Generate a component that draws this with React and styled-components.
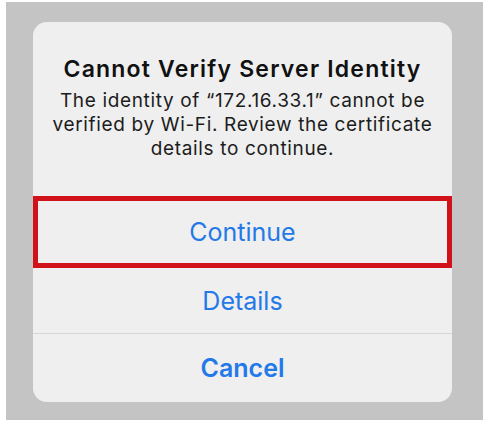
import React from 'react';
import styled, { createGlobalStyle } from 'styled-components';

const GlobalStyle = createGlobalStyle`
  html, body {
    margin: 0;
    padding: 0;
    background: #ffffff;
  }
  body {
    font-family: Inter, "Liberation Sans", Arial, sans-serif;
    -webkit-font-smoothing: antialiased;
  }
`;

const Backdrop = styled.div`
  box-sizing: border-box;
  width: 477px;
  height: 418px;
  margin: 2px 0 0 6px;
  padding: 20px 31px 0 27px;
  background: #c4c4c4;
`;

const Alert = styled.div`
  width: 419px;
  height: 380px;
  border-radius: 14px;
  background: #efefef;
  overflow: hidden;
  display: flex;
  flex-direction: column;
`;

const Header = styled.div`
  box-sizing: border-box;
  height: 174px;
  padding: 33px 10px 0;
  text-align: center;
`;

const Title = styled.h2`
  margin: 0 0 6px;
  font-size: 23px;
  line-height: 28px;
  font-weight: 600;
  color: #111111;
  letter-spacing: 1.2px;
`;

const Message = styled.p`
  margin: 0;
  font-size: 19px;
  line-height: 24px;
  font-weight: 400;
  color: #1c1c1c;
  letter-spacing: 0.65px;
`;

const Action = styled.button`
  box-sizing: border-box;
  display: flex;
  align-items: center;
  justify-content: center;
  width: 100%;
  height: ${p => p.$height}px;
  margin: 0;
  padding: 0;
  background: transparent;
  font-family: inherit;
  font-size: 25px;
  font-weight: ${p => (p.$bold ? 600 : 400)};
  color: #2479e8;
  border: ${p => (p.$highlight ? '5px solid #d2121b' : 'none')};
  ${p => p.$separator && 'border-top: 1px solid #d6d6d6;'}
  cursor: pointer;
`;

export default function App() {
  return (
    <>
      <GlobalStyle />
      <Backdrop>
        <Alert>
          <Header>
            <Title>Cannot Verify Server Identity</Title>
            <Message>
              The identity of “172.16.33.1” cannot be verified by Wi-Fi. Review the certificate details to continue.
            </Message>
          </Header>
          <Action $highlight $height={72}>Continue</Action>
          <Action $height={65}>Details</Action>
          <Action $bold $separator $height={69}>Cancel</Action>
        </Alert>
      </Backdrop>
    </>
  );
}
